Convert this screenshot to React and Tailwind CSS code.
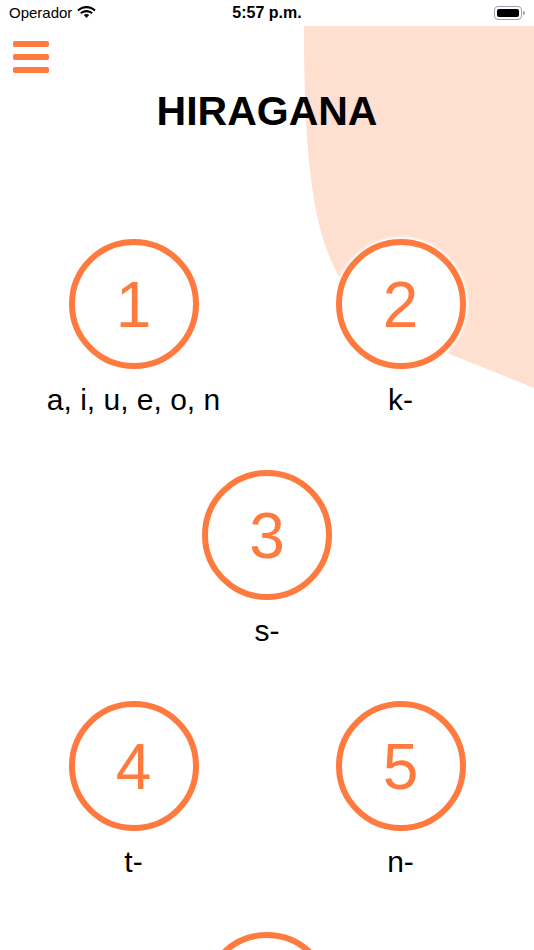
const groups = [
  [{ n: 1, label: 'a, i, u, e, o, n' }, { n: 2, label: 'k-' }],
  [{ n: 3, label: 's-' }],
  [{ n: 4, label: 't-' }, { n: 5, label: 'n-' }],
  [{ n: 6, label: 'h-' }],
]

function StatusBar() {
  return (
    <div className="relative h-[26px] flex items-center px-[9px] text-[15px] text-black">
      <div className="flex items-center gap-[5px]">
        <span>Operador</span>
        <svg width="19" height="14" viewBox="0 0 19 14">
          <path d="M9.5 2.2c3 0 5.7 1.2 7.8 3.1l1.4-1.5C16.2 1.5 13 0 9.5 0S2.8 1.5.3 3.8l1.4 1.5C3.8 3.4 6.5 2.2 9.5 2.2z" fill="black" />
          <path d="M9.5 6.2c1.9 0 3.6.7 4.9 1.9l1.4-1.5C14.2 5 11.9 4 9.5 4S4.8 5 3.2 6.6l1.4 1.5c1.3-1.2 3-1.9 4.9-1.9z" fill="black" />
          <path d="M9.5 8c1 0 2 .4 2.7 1.1L9.5 12 6.8 9.1C7.5 8.4 8.5 8 9.5 8z" fill="black" />
        </svg>
      </div>
      <span className="absolute left-0 right-0 text-center text-[16px] font-bold">5:57 p.m.</span>
      <div className="ml-auto flex items-center">
        <div className="w-[28px] h-[14px] rounded-[4px] border border-gray-400 p-[2px]">
          <div className="w-full h-full rounded-[2px] bg-black" />
        </div>
        <div className="w-[2px] h-[4px] rounded-r bg-gray-400 ml-[1px]" />
      </div>
    </div>
  )
}

function Lesson({ n, label }) {
  return (
    <div className="flex flex-col items-center">
      <div className="w-[130px] h-[130px] rounded-full border-[6px] border-[#ff7a3e] bg-white shadow-[0_0_3px_2px_white] flex items-center justify-center">
        <span className="text-[64px] leading-none text-[#ff7a3e] mt-[2px]">{n}</span>
      </div>
      <span className="mt-[13px] text-[30px] leading-[36px] text-black">{label}</span>
    </div>
  )
}

export default function App() {
  return (
    <div className="w-[534px] h-[950px] overflow-hidden bg-white font-['Liberation_Sans',Arial,sans-serif]">
      <StatusBar />
      <div className="relative">
        {/* peach blob behind the header */}
        <svg className="absolute top-0 left-0" width="534" height="380" viewBox="0 0 534 380">
          <path d="M304 0 H534 V362 L447 327 C330 290 304 230 304 0 Z" fill="#ffdfd0" />
        </svg>
        <div className="relative">
          <div className="pl-[13px] pt-[15px] flex flex-col gap-[7px] w-fit">
            <div className="w-[36px] h-[6px] rounded-[2px] bg-[#ff7a3e]" />
            <div className="w-[36px] h-[6px] rounded-[2px] bg-[#ff7a3e]" />
            <div className="w-[36px] h-[6px] rounded-[2px] bg-[#ff7a3e]" />
          </div>
          <h1 className="mt-[18px] text-center text-[41px] leading-[41px] font-bold text-black">HIRAGANA</h1>
          <div className="mt-[107px] flex flex-col gap-[52px]">
            {groups.map((row, i) => (
              <div key={i} className="flex">
                {row.map((item) => (
                  <div key={item.n} className="flex-1 flex justify-center">
                    <Lesson {...item} />
                  </div>
                ))}
              </div>
            ))}
          </div>
        </div>
      </div>
    </div>
  )
}
